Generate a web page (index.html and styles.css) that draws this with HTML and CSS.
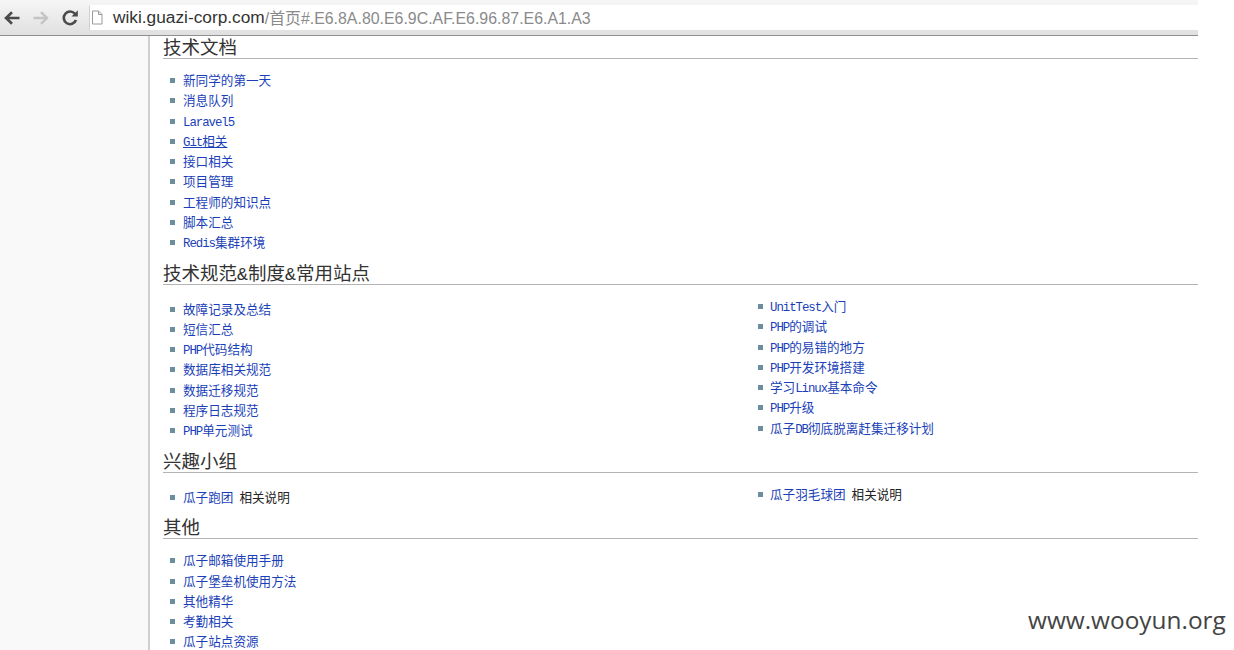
FILE: index.html
```html
<!DOCTYPE html>
<html lang="zh-CN">
<head>
<meta charset="utf-8">
<title>技术文档</title>
<link rel="stylesheet" href="styles.css">
</head>
<body>
<header class="toolbar">
  <div class="nav">
    <svg class="nav-icon" width="18" height="16" viewBox="0 0 18 16"><path d="M16.5 8H4M9 2.2 3 8l6 5.8" fill="none" stroke="#4a4a4a" stroke-width="2.6"/></svg>
    <svg class="nav-icon" width="18" height="16" viewBox="0 0 18 16"><path d="M1.5 8H14M9 2.2 15 8l-6 5.8" fill="none" stroke="#c4c4c4" stroke-width="2.4"/></svg>
    <svg class="nav-icon" width="18" height="18" viewBox="0 0 18 18"><path d="M14.2 5.2A6.3 6.3 0 1 0 15 11" fill="none" stroke="#4a4a4a" stroke-width="2.6"/><path d="M10.5 7.4h6.3V1.2z" fill="#4a4a4a"/></svg>
  </div>
  <div class="address">
    <svg class="page-icon" width="12" height="15" viewBox="0 0 12 15"><path d="M1.500 1h6l3.500 3.500V14h-9.500zM7.500 1v3.500H11" fill="#fff" stroke="#9a9a9a"/></svg>
    <span class="host">wiki.guazi-corp.com</span><span class="path">/首页#.E6.8A.80.E6.9C.AF.E6.96.87.E6.A1.A3</span>
  </div>
</header>
<div class="page">
  <aside class="sidebar"></aside>
  <main class="content">
    <section class="section">
      <h2 class="title">技术文档</h2>
      <ul class="list list-one">
        <li><a href="#">新同学的第一天</a></li>
        <li><a href="#">消息队列</a></li>
        <li><a href="#"><span class="lat">Laravel5</span></a></li>
        <li><a href="#" class="hover"><span class="lat">Git</span>相关</a></li>
        <li><a href="#">接口相关</a></li>
        <li><a href="#">项目管理</a></li>
        <li><a href="#">工程师的知识点</a></li>
        <li><a href="#">脚本汇总</a></li>
        <li><a href="#"><span class="lat">Redis</span>集群环境</a></li>
      </ul>
    </section>
    <section class="section">
      <h2 class="title">技术规范<span class="amp">&amp;</span>制度<span class="amp">&amp;</span>常用站点</h2>
      <div class="columns">
        <ul class="list list-left">
          <li><a href="#">故障记录及总结</a></li>
          <li><a href="#">短信汇总</a></li>
          <li><a href="#"><span class="lat">PHP</span>代码结构</a></li>
          <li><a href="#">数据库相关规范</a></li>
          <li><a href="#">数据迁移规范</a></li>
          <li><a href="#">程序日志规范</a></li>
          <li><a href="#"><span class="lat">PHP</span>单元测试</a></li>
        </ul>
        <ul class="list list-right">
          <li><a href="#"><span class="lat">UnitTest</span>入门</a></li>
          <li><a href="#"><span class="lat">PHP</span>的调试</a></li>
          <li><a href="#"><span class="lat">PHP</span>的易错的地方</a></li>
          <li><a href="#"><span class="lat">PHP</span>开发环境搭建</a></li>
          <li><a href="#">学习<span class="lat">Linux</span>基本命令</a></li>
          <li><a href="#"><span class="lat">PHP</span>升级</a></li>
          <li><a href="#">瓜子<span class="lat">DB</span>彻底脱离赶集迁移计划</a></li>
        </ul>
      </div>
    </section>
    <section class="section">
      <h2 class="title">兴趣小组</h2>
      <div class="columns">
        <ul class="list list-left">
          <li><a href="#">瓜子跑团</a><span class="note">相关说明</span></li>
        </ul>
        <ul class="list list-right">
          <li><a href="#">瓜子羽毛球团</a><span class="note">相关说明</span></li>
        </ul>
      </div>
    </section>
    <section class="section">
      <h2 class="title">其他</h2>
      <ul class="list list-one">
        <li><a href="#">瓜子邮箱使用手册</a></li>
        <li><a href="#">瓜子堡垒机使用方法</a></li>
        <li><a href="#">其他精华</a></li>
        <li><a href="#">考勤相关</a></li>
        <li><a href="#">瓜子站点资源</a></li>
      </ul>
    </section>
  </main>
</div>
<div class="watermark">www.wooyun.org</div>
</body>
</html>
```
FILE: styles.css
```css
html, body {
  margin: 0;
  height: 650px;
  overflow: hidden;
  background: #fff;
}
body {
  font-family: "Noto Sans CJK SC", "Liberation Sans", sans-serif;
}
.toolbar {
  box-sizing: border-box;
  width: 1198px;
  height: 36px;
  display: flex;
  align-items: flex-start;
  background: linear-gradient(#f6f6f6, #e0e0e0);
  border-bottom: 1px solid #8f8f8f;
  position: relative;
  z-index: 1;
}
.nav {
  width: 89px;
  height: 35px;
  flex: none;
  display: flex;
  align-items: center;
  gap: 11px;
  padding: 0 0 0 3px;
  box-sizing: border-box;
}
.nav-icon {
  flex: none;
}
.address {
  flex: 1;
  height: 25px;
  margin-top: 5px;
  background: #fff;
  border-left: 1px solid #d0d0d0;
  border-radius: 2px 0 0 0;
  display: flex;
  align-items: center;
  font-family: "Liberation Sans", "Noto Sans CJK SC", sans-serif;
  white-space: nowrap;
}
.page-icon {
  margin: 0 10px 0 1px;
  flex: none;
}
.host {
  font-size: 17.3px;
  color: #333;
}
.path {
  font-size: 15.9px;
  color: #8a8a8a;
}
.page {
  display: flex;
  width: 1198px;
  height: 614px;
}
.sidebar {
  width: 148px;
  flex: none;
  background: #f9f9f9;
  border-right: 2px solid #cfcfcf;
}
.content {
  flex: 1;
  padding-left: 13px;
}
.section + .section {
  margin-top: 9.5px;
}
.title {
  margin: 0;
  box-sizing: content-box;
  height: 20px;
  padding-bottom: 2px;
  line-height: 20px;
  font-size: 18.5px;
  font-weight: 400;
  color: #333;
  border-bottom: 1px solid #b4b4b4;
  white-space: nowrap;
}
.amp {
  font-family: "Liberation Mono", monospace;
  font-size: 18.3px;
}
.columns {
  display: grid;
  grid-template-columns: 587px 1fr;
}
.list {
  margin: 0;
  padding: 0 0 0 20px;
  list-style: none;
}
.list-one {
  margin-top: 11px;
}
.list-left {
  margin-top: 13.75px;
}
.list-right {
  margin-top: 11.25px;
}
.list li {
  height: 20.25px;
  line-height: 20.25px;
  font-size: 12.6px;
  position: relative;
  white-space: nowrap;
}
.list li::before {
  content: "";
  position: absolute;
  left: -13px;
  top: 8px;
  width: 5px;
  height: 5px;
  background: #6b8e9e;
}
.list-right li::before {
  left: -12px;
}
.list a {
  color: #1a3fb8;
  text-decoration: none;
}
.list a.hover {
  text-decoration: underline;
}
.lat {
  font-family: "Liberation Mono", monospace;
  font-size: 12.4px;
  letter-spacing: -1.04px;
}
.note {
  margin-left: 6px;
  color: #222;
}
.watermark {
  position: absolute;
  left: 1028px;
  top: 603px;
  font-family: "Open Sans", sans-serif;
  font-size: 24.4px;
  line-height: 34px;
  color: #444;
  white-space: nowrap;
}
```
